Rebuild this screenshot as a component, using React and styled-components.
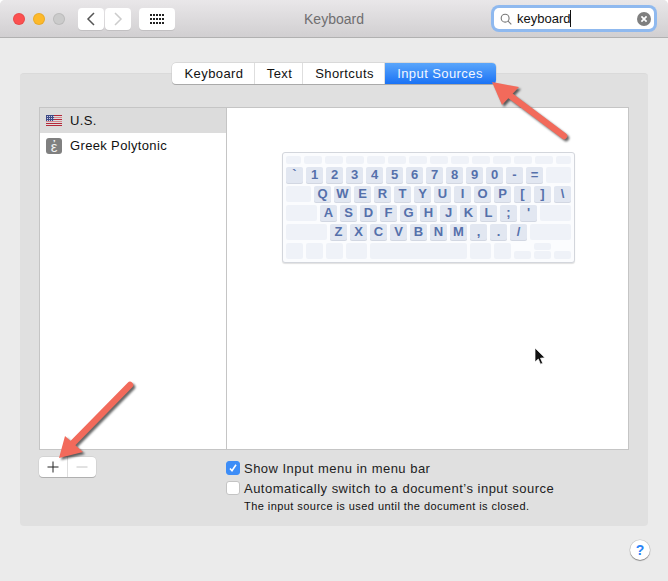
import React from 'react'
import styled, { createGlobalStyle } from 'styled-components'

const GlobalStyle = createGlobalStyle`
  html, body { margin: 0; padding: 0; background: #fff; }
  body { font-family: "Liberation Sans", Arial, sans-serif; color: #1a1a1a; }
`

const Window = styled.div`
  position: relative;
  width: 668px;
  height: 581px;
  overflow: hidden;
  background: #ebebeb;
  border-radius: 5px 5px 0 0;
  display: flex;
  flex-direction: column;
`

const TitleBar = styled.header`
  position: relative;
  flex: none;
  height: 38px;
  box-sizing: border-box;
  padding: 8px 14px 0 13px;
  display: flex;
  align-items: flex-start;
  background: linear-gradient(#e9e7e9, #d1cfd1);
  border-bottom: 1px solid #b1b1b1;
`

const Light = styled.span`
  width: 12px;
  height: 12px;
  margin: 5px 8px 0 0;
  border-radius: 50%;
  background: ${p => p.$color};
  box-shadow: inset 0 0 0 1px rgba(0,0,0,.08);
`

const NavGroup = styled.div`
  display: flex;
  gap: 1px;
  margin: 0 8px 0 5px;
`

const ToolButton = styled.button`
  width: ${p => p.$width}px;
  height: 22px;
  padding: 0;
  border: 0;
  border-radius: 4px;
  background: #fff;
  box-shadow: 0 1px 0 #c2c0c2;
  display: flex;
  align-items: center;
  justify-content: center;
`

const Title = styled.div`
  position: absolute;
  left: 0;
  right: 0;
  top: 11px;
  text-align: center;
  font-size: 14px;
  color: #6f6e70;
`

const Search = styled.div`
  margin: 0 0 0 auto;
  width: 160px;
  height: 21px;
  box-sizing: border-box;
  padding: 0 3px 0 6px;
  display: flex;
  align-items: center;
  background: #fff;
  border-radius: 5px;
  box-shadow: 0 0 0 3px #8fb9ef;
  font-size: 13px;
  color: #111;
`

const Caret = styled.span`
  width: 1px;
  height: 17px;
  background: #111;
`

const ClearIcon = styled.svg`
  margin-left: auto;
`

const Body = styled.main`
  flex: 1;
  padding: 35px 20px 0;
  display: flex;
  flex-direction: column;
`

const Panel = styled.section`
  height: 453px;
  box-sizing: border-box;
  padding: 0 19px;
  background: #e0e0e0;
  border-top: 1px solid #dadada;
  border-radius: 4px;
  display: flex;
  flex-direction: column;
`

const Tabs = styled.nav`
  align-self: center;
  margin-top: -11px;
  display: flex;
  height: 21px;
  border-radius: 4px;
  background: #fff;
  box-shadow: 0 1px 0 #aaa, 0 0 0 .5px #c8c8c8;
`

const Tab = styled.div`
  width: ${p => p.$width}px;
  display: flex;
  align-items: center;
  justify-content: center;
  font-size: 13px;
  letter-spacing: .42px;
  box-sizing: border-box;
  padding-left: ${p => (p.$active ? 0 : 2)}px;
  border-right: 1px solid ${p => (p.$active ? 'transparent' : '#dedede')};
  color: ${p => (p.$active ? '#f2f7ff' : '#111')};
  background: ${p => (p.$active ? 'linear-gradient(#5aa6fb, #1a72f5)' : 'none')};
  border-radius: ${p => (p.$active ? '0 4px 4px 0' : '0')};
`

const Split = styled.div`
  margin-top: 23px;
  height: 343px;
  box-sizing: border-box;
  display: flex;
  background: #fff;
  border: 1px solid #c5c5c5;
`

const SourceList = styled.ul`
  flex: none;
  width: 186px;
  margin: 0;
  padding: 0;
  list-style: none;
  border-right: 1px solid #c5c5c5;
`

const SourceRow = styled.li`
  height: 25px;
  padding-left: 6px;
  display: flex;
  align-items: center;
  gap: 8px;
  font-size: 13px;
  letter-spacing: .35px;
  color: #111;
  background: ${p => (p.$selected ? '#dcdcdc' : 'transparent')};
`

const GreekIcon = styled.span`
  width: 16px;
  height: 16px;
  border-radius: 3px;
  background: #808080;
  color: #f1f1f1;
  font-size: 15px;
  line-height: 17px;
  letter-spacing: 0;
  text-align: center;
`

const Preview = styled.div`
  flex: 1;
  padding: 44px 0 0 55px;
`

const Keyboard = styled.div`
  width: 293px;
  height: 111px;
  box-sizing: border-box;
  padding: 3px 3px 0;
  display: flex;
  flex-direction: column;
  gap: 3px;
  background: #fbfcfe;
  border: 1px solid #d3d6dc;
  border-radius: 3px;
  box-shadow: 0 1px 1px rgba(0,0,0,.12);
`

const KeyRow = styled.div`
  display: flex;
  gap: 3px;
  height: ${p => p.$height || 16}px;
  align-items: flex-end;
`

const Key = styled.div`
  flex: none;
  width: ${p => p.$w}px;
  height: ${p => p.$h || 16}px;
  border-radius: 2px;
  background: ${p => (p.$label ? '#e2e7f1' : '#eff2f8')};
  color: #5570ab;
  font-size: 13px;
  font-weight: 700;
  line-height: 16px;
  text-align: center;
  box-shadow: ${p => (p.$label ? '0 1px 0 #d2d7e2' : 'none')};
`

const ArrowStack = styled.div`
  display: flex;
  flex-direction: column;
  gap: 1px;
`

const BottomBar = styled.div`
  margin-top: 7px;
  display: flex;
  align-items: flex-start;
`

const AddRemove = styled.div`
  flex: none;
  width: 57px;
  height: 20px;
  display: flex;
  background: #fff;
  border-radius: 4px;
  box-shadow: 0 1px 0 #b0b0b0, 0 0 0 .5px #c8c8c8;
`

const AddButton = styled.div`
  width: ${p => p.$width}px;
  display: flex;
  align-items: center;
  justify-content: center;
  border-right: ${p => (p.$divider ? '1px solid #dedede' : '0')};
`

const Options = styled.div`
  margin: 1px 0 0 130px;
  display: flex;
  flex-direction: column;
  font-size: 13px;
  letter-spacing: .48px;
`

const Option = styled.label`
  display: flex;
  align-items: center;
  gap: 4px;
  height: 20px;
  color: #222;
`

const Box = styled.span`
  flex: none;
  width: 14px;
  height: 14px;
  box-sizing: border-box;
  border-radius: 3px;
  background: ${p => (p.$checked ? '#3d8df7' : '#fff')};
  border: 1px solid ${p => (p.$checked ? '#3d8df7' : '#c4c4c4')};
  display: flex;
  align-items: center;
  justify-content: center;
`

const Note = styled.div`
  margin: 2px 0 0 18px;
  font-size: 11px;
  letter-spacing: .44px;
  color: #111;
`

const Footer = styled.footer`
  display: flex;
  justify-content: flex-end;
  margin-right: -2px;
  padding-top: 14px;
`

const Help = styled.button`
  width: 20px;
  height: 20px;
  padding: 0;
  border: 0;
  border-radius: 50%;
  background: #fff;
  box-shadow: 0 1px 1px rgba(0,0,0,.35), 0 0 0 .5px #c4c4c4;
  color: #2a84f7;
  font: 700 14px "Liberation Sans", Arial, sans-serif;
`

const Overlay = styled.svg`
  position: absolute;
  left: 0;
  top: 0;
  pointer-events: none;
`

const ArrowGroup = styled.g`
  filter: drop-shadow(2px 2px 1.2px rgba(0,0,0,.6));
`

const Flag = () => (
  <svg width="16" height="11" viewBox="0 0 16 11">
    {[0, 1, 2, 3, 4, 5].map(i => (
      <rect key={i} y={i * 2} width="16" height="1" fill={i % 2 ? '#d9878c' : '#b5293a'} />
    ))}
    <rect y="10" width="16" height="1" fill="#b5293a" />
    <rect width="8" height="6" fill="#3e4a86" />
    {[1, 3, 5, 7].map(x => [1, 3, 5].map(y => <rect key={`${x}${y}`} x={x} y={y} width="1" height="1" fill="#ccd0e4" />))}
  </svg>
)

const Arrow = ({ tail, neck, tip, a, b }) => (
  <ArrowGroup>
    <line x1={tail[0]} y1={tail[1]} x2={neck[0]} y2={neck[1]} stroke="#f26a5b" strokeWidth="6.5" strokeLinecap="round" />
    <polygon points={`${tip} ${a} ${b}`} fill="#f26a5b" />
  </ArrowGroup>
)

const row0 = [15, 18, 18, 18, 18, 18, 18, 18, 18, 18, 18, 18, 18, 15]

const numberRow = ['`', '1', '2', '3', '4', '5', '6', '7', '8', '9', '0', '-', '=']
const qwertyRow = ['Q', 'W', 'E', 'R', 'T', 'Y', 'U', 'I', 'O', 'P', '[', ']', '\\']
const homeRow = ['A', 'S', 'D', 'F', 'G', 'H', 'J', 'K', 'L', ';', "'"]
const bottomRow = ['Z', 'X', 'C', 'V', 'B', 'N', 'M', ',', '.', '/']

const Keys = ({ labels }) => labels.map(l => <Key key={l} $w={17} $label>{l}</Key>)

export default function App() {
  return (
    <Window>
      <GlobalStyle />
      <TitleBar>
        <Light $color="#fc5050" />
        <Light $color="#fdb92a" />
        <Light $color="#cbcbcb" />
        <NavGroup>
          <ToolButton $width={26}>
            <svg width="10" height="14" viewBox="0 0 10 14"><path d="M8 1 2 7l6 6" fill="none" stroke="#555" strokeWidth="1.5" /></svg>
          </ToolButton>
          <ToolButton $width={26}>
            <svg width="10" height="14" viewBox="0 0 10 14"><path d="m2 1 6 6-6 6" fill="none" stroke="#ccc" strokeWidth="1.5" /></svg>
          </ToolButton>
        </NavGroup>
        <ToolButton $width={36}>
          <svg width="15" height="11" viewBox="0 0 15 11" fill="#222">
            {[0, 4, 8].map(y => [0, 3, 6, 9, 12].map(x => <rect key={`${x}-${y}`} x={x} y={y} width="2" height="2" />))}
          </svg>
        </ToolButton>
        <Title>Keyboard</Title>
        <Search>
          <svg width="12" height="12" viewBox="0 0 14 14" fill="none" stroke="#777" strokeWidth="1.3" style={{ marginRight: 5 }}>
            <circle cx="6" cy="6" r="4.6" /><path d="m9.4 9.4 3.8 3.8" />
          </svg>
          keyboard<Caret />
          <ClearIcon width="14" height="14" viewBox="0 0 14 14">
            <circle cx="7" cy="7" r="7" fill="#7f7f7f" />
            <path d="m4.4 4.4 5.2 5.2m0-5.2-5.2 5.2" stroke="#fff" strokeWidth="1.7" />
          </ClearIcon>
        </Search>
      </TitleBar>

      <Body>
        <Panel>
          <Tabs>
            <Tab $width={83}>Keyboard</Tab>
            <Tab $width={48}>Text</Tab>
            <Tab $width={82}>Shortcuts</Tab>
            <Tab $width={111} $active>Input Sources</Tab>
          </Tabs>
          <Split>
            <SourceList>
              <SourceRow $selected><Flag />U.S.</SourceRow>
              <SourceRow><GreekIcon>ἐ</GreekIcon>Greek Polytonic</SourceRow>
            </SourceList>
            <Preview>
              <Keyboard>
                <KeyRow $height={8}>
                  {row0.map((w, i) => <Key key={i} $w={w} $h={8} />)}
                </KeyRow>
                <KeyRow>
                  <Keys labels={numberRow} />
                  <Key $w={25} />
                </KeyRow>
                <KeyRow>
                  <Key $w={25} />
                  <Keys labels={qwertyRow} />
                </KeyRow>
                <KeyRow>
                  <Key $w={31} />
                  <Keys labels={homeRow} />
                  <Key $w={31} />
                </KeyRow>
                <KeyRow>
                  <Key $w={41} />
                  <Keys labels={bottomRow} />
                  <Key $w={41} />
                </KeyRow>
                <KeyRow>
                  <Key $w={17} />
                  <Key $w={17} />
                  <Key $w={17} />
                  <Key $w={21} />
                  <Key $w={97} />
                  <Key $w={21} />
                  <Key $w={17} />
                  <Key $w={17} $h={8} />
                  <ArrowStack>
                    <Key $w={17} $h={7} />
                    <Key $w={17} $h={8} />
                  </ArrowStack>
                  <Key $w={17} $h={8} />
                </KeyRow>
              </Keyboard>
            </Preview>
          </Split>
          <BottomBar>
            <AddRemove>
              <AddButton $width={28} $divider>
                <svg width="12" height="12" viewBox="0 0 12 12"><path d="M6 .5v11M.5 6h11" stroke="#222" strokeWidth="1" /></svg>
              </AddButton>
              <AddButton $width={29}>
                <svg width="12" height="12" viewBox="0 0 12 12"><path d="M.5 6h11" stroke="#c4c4c4" strokeWidth="1" /></svg>
              </AddButton>
            </AddRemove>
            <Options>
              <Option>
                <Box $checked>
                  <svg width="10" height="10" viewBox="0 0 10 10"><path d="m2 5.5 2 2.3L8 1.8" fill="none" stroke="#fff" strokeWidth="1.6" /></svg>
                </Box>
                Show Input menu in menu bar
              </Option>
              <Option><Box />Automatically switch to a document’s input source</Option>
              <Note>The input source is used until the document is closed.</Note>
            </Options>
          </BottomBar>
        </Panel>
        <Footer>
          <Help>?</Help>
        </Footer>
      </Body>

      <Overlay width="668" height="581" viewBox="0 0 668 581">
        <Arrow tail={[564, 136]} neck={[508, 94]} tip={[492, 82]} a={[519, 87]} b={[502, 105]} />
        <Arrow tail={[130, 385]} neck={[72, 444]} tip={[59, 458]} a={[65, 436]} b={[83, 452]} />
        <path d="M535 348v14l3.3-3 2.2 5.2 2.2-1-2.2-5 4.4-.4z" fill="#111" stroke="#fff" strokeWidth=".7" />
      </Overlay>
    </Window>
  )
}
